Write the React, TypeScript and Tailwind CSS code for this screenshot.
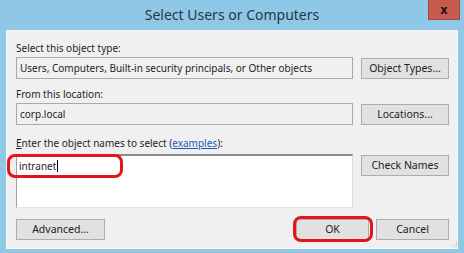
import React from 'react';

const font = { fontFamily: '"Noto Sans", "Open Sans", sans-serif' };

const Btn: React.FC<{ label: React.ReactNode; className?: string }> = ({ label, className = '' }) => (
  <button
    className={`h-[21px] shrink-0 border border-[#acacac] bg-[#e1e1e1] text-[10.5px] text-[#1e1e1e] leading-none ${className}`}
  >
    {label}
  </button>
);

const Highlight: React.FC<{ className: string }> = ({ className }) => (
  <div className={`pointer-events-none absolute rounded-[8px] border-[3px] border-[#e3141c] ${className}`} />
);

export default function App() {
  return (
    <div
      className="relative flex h-[253px] w-[464px] flex-col overflow-hidden bg-[#8fc8e6]"
      style={font}
    >
      {/* title bar */}
      <div className="relative flex h-[30px] shrink-0 items-center justify-center">
        <span className="text-[14px] text-[#23374a] pb-[2px]">Select Users or Computers</span>
        <div className="absolute right-[4px] top-0 flex h-[20px] w-[32px] items-center justify-center border border-[#a3483d] border-t-0 bg-[#c65a4c]">
          <span className="text-[12px] font-bold leading-none text-[#111]">x</span>
        </div>
      </div>

      {/* client area */}
      <div className="mx-[6px] flex flex-col border border-[#f7f7f7] bg-[#f0f0f0] pl-[9px] pr-[8px] pt-[9px] pb-[8px] text-[10px] text-[#1e1e1e]">
        <div className="h-[16px] leading-[16px]">Select this object type:</div>
        <div className="mt-[1px] flex items-center gap-[8px]">
          <div className="flex h-[22px] w-[337px] items-center border border-[#a9a9a9] bg-[#f0f0f0] px-[3px]">
            Users, Computers, Built-in security principals, or Other objects
          </div>
          <Btn label="Object Types..." className="w-[88px]" />
        </div>

        <div className="mt-[7px] h-[16px] leading-[16px]">From this location:</div>
        <div className="mt-[1px] flex items-center gap-[8px]">
          <div className="flex h-[22px] w-[337px] items-center border border-[#a9a9a9] bg-[#f0f0f0] px-[3px]">
            corp.local
          </div>
          <Btn label="Locations..." className="w-[88px]" />
        </div>

        <div className="mt-[10px] h-[16px] leading-[16px]">
          <span className="underline">E</span>nter the object names to select (
          <span className="text-[#1a5fb4] underline">examples</span>):
        </div>
        <div className="mt-[3px] flex items-start gap-[8px]">
          <div className="h-[54px] w-[337px] border-t-2 border-l border-r border-b border-t-[#8a8a8a] border-l-[#a0a0a0] border-r-[#dcdcdc] border-b-[#e4e4e4] bg-white px-[2px] pt-[2px] leading-[14px]">
            intranet<span className="ml-[1px] inline-block h-[12px] w-px translate-y-[2px] bg-black" />
          </div>
          <Btn label="Check Names" className="w-[88px] mt-[1px]" />
        </div>

        <div className="mt-[11px] flex items-center">
          <Btn label="Advanced..." className="w-[89px]" />
          <div className="flex-1" />
          <Btn label="OK" className="w-[73px]" />
          <Btn label="Cancel" className="ml-[7px] w-[73px]" />
        </div>
      </div>

      {/* resize grip */}
      <div className="absolute bottom-[6px] right-[7px] grid grid-cols-3 gap-px">
        <span className="h-px w-px" />
        <span className="h-px w-px" />
        <span className="h-px w-px bg-[#b8b8b8]" />
        <span className="h-px w-px" />
        <span className="h-px w-px bg-[#b8b8b8]" />
        <span className="h-px w-px bg-[#b8b8b8]" />
        <span className="h-px w-px bg-[#b8b8b8]" />
        <span className="h-px w-px bg-[#b8b8b8]" />
        <span className="h-px w-px bg-[#b8b8b8]" />
      </div>

      {/* annotations */}
      <Highlight className="left-[7px] top-[154px] h-[24px] w-[116px]" />
      <Highlight className="left-[293px] top-[216px] h-[26px] w-[80px]" />
    </div>
  );
}
